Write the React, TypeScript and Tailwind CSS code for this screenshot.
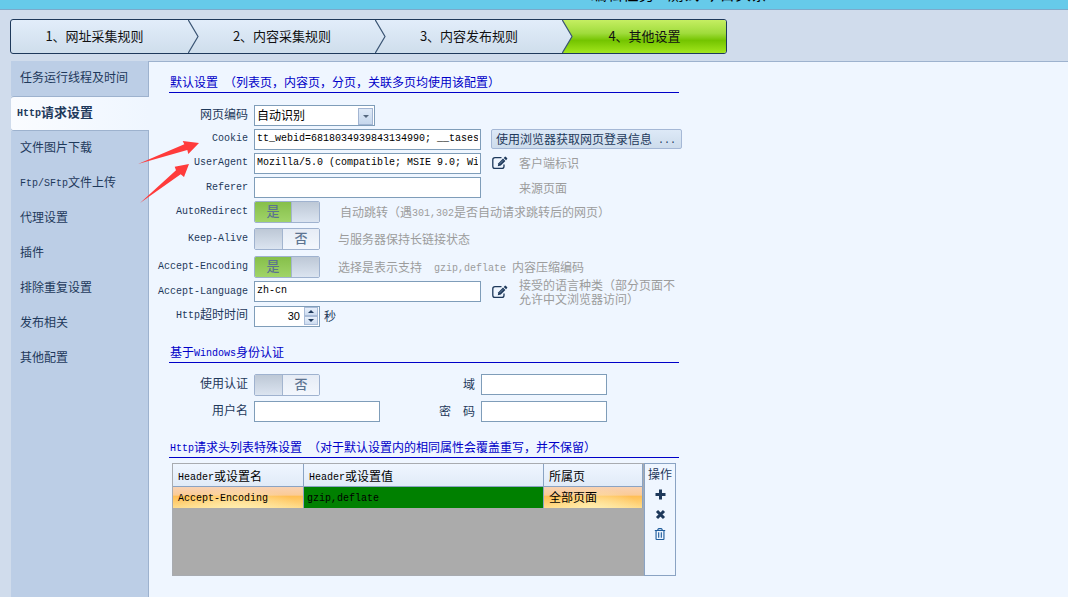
import clsx from "clsx";
import React, { useState } from "react";
import { FaRegTrashAlt } from "react-icons/fa";

const MONO = "font-['Liberation_Mono','Noto_Sans_CJK_SC',monospace]";

const steps = ["1、网址采集规则", "2、内容采集规则", "3、内容发布规则", "4、其他设置"];

const menu = [
	"任务运行线程及时间",
	"Http请求设置",
	"文件图片下载",
	"Ftp/SFtp文件上传",
	"代理设置",
	"插件",
	"排除重复设置",
	"发布相关",
	"其他配置",
];

// latin runs are set in a half-width mono face next to the full-width glyphs
const Mixed = ({ text }: { text: string }) => (
	<>
		{text.split(/([\x20-\x7e]+)/).map((part, i) =>
			i % 2 ? (
				<span
					key={i}
					className={clsx(MONO, "align-[1px] text-[10px] leading-none whitespace-pre")}
				>
					{part}
				</span>
			) : (
				part
			)
		)}
	</>
);

const Wizard = ({ current }: { current: number }) => (
	<ol className="flex h-[35px] w-[717px] overflow-hidden rounded-[3px] border border-[#1e395b] bg-linear-to-b from-[#e2edfa] to-[#cfdeec] text-[13px] text-[#111]">
		{steps.map((step, i) => (
			<li
				key={step}
				className={clsx(
					"flex",
					i === steps.length - 1 ? "flex-1" : i ? "w-[187px]" : "w-[177px]",
					i === current &&
						"bg-[linear-gradient(#c5ee62_0%,#a0dc3c_40%,#74c400_62%,#a2e61c_100%)]"
				)}
			>
				{i > 0 && (
					<svg width="11" height="33" viewBox="0 0 11 33" className="shrink-0">
						<defs>
							<linearGradient id={`step${i}`} x1="0" y1="0" x2="0" y2="1">
								<stop offset="0" stopColor="#e2edfa" />
								<stop offset="1" stopColor="#cfdeec" />
							</linearGradient>
						</defs>
						<path
							d="M0 -0.5 L10 16.5 L0 33.5"
							fill={`url(#step${i})`}
							stroke="#3c5675"
							strokeWidth="1.2"
						/>
					</svg>
				)}
				<button type="button" className="flex-1 pr-2.5 pb-0.5">
					{step}
				</button>
			</li>
		))}
	</ol>
);

const SideMenu = ({ active, onSelect }: { active: number; onSelect: (i: number) => void }) => (
	<nav className="flex w-[138px] shrink-0 flex-col">
		{menu.map((item, i) => (
			<button
				key={item}
				type="button"
				onClick={() => onSelect(i)}
				className={clsx(
					"h-[35px] border-[#9db2ce] pb-1 text-left",
					i === active
						? "rounded-l-[3px] border-y bg-linear-to-r from-[#fafcff] to-[#eff6ff] pl-[6px] text-[13px] font-bold"
						: "border-r bg-[#bccee6] pl-[9px]"
				)}
			>
				<Mixed text={item} />
			</button>
		))}
		<div className="flex-1 border-r border-[#9db2ce] bg-[#bccee6]" />
	</nav>
);

const Heading = ({ text, className }: { text: string; className?: string }) => (
	<h2
		className={clsx(
			"ml-3 h-[21px] w-[510px] border-b border-[#0000c8] pl-px leading-5 text-[#0000c8]",
			className
		)}
	>
		<Mixed text={text} />
	</h2>
);

interface RowProps {
	label: string;
	htmlFor: string;
	className: string;
	children: React.ReactNode;
}

const Row = ({ label, htmlFor, className, children }: RowProps) => (
	<div className={clsx("flex items-center", className)}>
		<label htmlFor={htmlFor} className="mr-1.5 w-[91px] shrink-0 pb-1 text-right whitespace-nowrap">
			<Mixed text={label} />
		</label>
		{children}
	</div>
);

const TextBox = ({ id, value = "", wide }: { id: string; value?: string; wide?: boolean }) => (
	<input
		id={id}
		type="text"
		defaultValue={value}
		className={clsx(
			MONO,
			"h-[21px] shrink-0 border border-[#7f9db9] bg-white px-0.5 pb-0.5 text-[10px] text-black outline-none",
			wide ? "w-[227px]" : "w-[126px]"
		)}
	/>
);

const Toggle = ({ id, initial }: { id: string; initial: boolean }) => {
	const [on, setOn] = useState(initial);
	const knob = (
		<span
			className={clsx(
				"w-[28px] border-[#a3b5cf] bg-linear-to-b from-[#bdc8d6] to-[#dbe4f0]",
				on ? "border-l" : "border-r"
			)}
		/>
	);

	return (
		<button
			id={id}
			type="button"
			role="switch"
			aria-checked={on}
			onClick={() => setOn(!on)}
			className="flex h-[22px] w-[66px] shrink-0 overflow-hidden rounded-[2px] border border-[#9fb2cf] text-[13px] leading-[18px] text-[#5c7390]"
		>
			{!on && knob}
			<span
				className={clsx(
					"h-5 flex-1 font-medium",
					on
						? "bg-linear-to-b from-[#86bf4a] to-[#a0d468]"
						: "bg-linear-to-b from-[#e6ecf5] to-[#f3f7fd]"
				)}
			>
				{on ? "是" : "否"}
			</span>
			{on && knob}
		</button>
	);
};

const Hint = ({ text, className }: { text: string; className?: string }) => (
	<span className={clsx("leading-[14px] text-[#9c9c9c]", className)}>
		<Mixed text={text} />
	</span>
);

const EditButton = ({ label }: { label: string }) => (
	<button type="button" aria-label={label} className="ml-[11px] w-[27px] shrink-0">
		<svg width="16" height="14" viewBox="0 0 16 14" fill="none">
			<path
				d="M9.5 1.6 H3 Q0.8 1.6 0.8 3.8 V10.2 Q0.8 12.4 3 12.4 H9.8 Q12 12.4 12 10.2 V8.6"
				stroke="#1e395b"
				strokeWidth="1.3"
			/>
			<path d="M5.8 10.2 L6.4 7.2 L11 2.6 L13.4 5 L8.8 9.6 Z" fill="#1e395b" />
			<path d="M11.7 1.9 L12.9 0.8 Q13.4 0.4 13.9 0.9 L15.1 2.1 Q15.6 2.6 15.1 3.1 L14.1 4.3 Z" fill="#1e395b" />
			<path d="M7.6 7.9 L11.2 4.3" stroke="#8fa6c2" strokeWidth="0.7" />
		</svg>
	</button>
);

const Spinner = ({ id }: { id: string }) => {
	const [seconds, setSeconds] = useState(30);
	const btn =
		"flex h-[9px] w-[14px] items-center justify-center border border-[#a9bcd8] bg-linear-to-b from-[#e8f0fb] to-[#cddcf0]";

	return (
		<span className="flex h-[21px] w-[66px] shrink-0 items-center border border-[#7f9db9] bg-white pr-px">
			<input
				id={id}
				type="text"
				inputMode="numeric"
				value={seconds}
				onChange={(e) => setSeconds(Number(e.target.value) || 0)}
				className="w-full min-w-0 pr-1 text-right font-['Liberation_Sans',sans-serif] text-[11px] text-black outline-none"
			/>
			<span className="flex flex-col">
				<button type="button" aria-label="增加" className={btn} onClick={() => setSeconds(seconds + 1)}>
					<svg width="6" height="3" viewBox="0 0 6 3">
						<path d="M0 3 L3 0 L6 3 Z" fill="#1e395b" />
					</svg>
				</button>
				<button type="button" aria-label="减少" className={btn} onClick={() => setSeconds(seconds - 1)}>
					<svg width="6" height="3" viewBox="0 0 6 3">
						<path d="M0 0 L3 3 L6 0 Z" fill="#1e395b" />
					</svg>
				</button>
			</span>
		</span>
	);
};

const HeaderTable = () => {
	const cell = "border-r border-[#8aa3c3] text-left font-normal";
	const picked =
		"bg-[radial-gradient(ellipse_at_50%_120%,#fff0b4_0%,#ffe9a000_70%),linear-gradient(#f8d2b4_0%,#fbcb96_38%,#ffbf55_45%,#ffdc8c_100%)]";

	return (
		<div className="mt-[5px] ml-[15px] flex h-[113px]">
			<div className="w-[472px] border border-[#a8abb0] bg-[#ababab]">
				<table className="w-full table-fixed border-separate border-spacing-0 text-black">
					<colgroup>
						<col className="w-[131px]" />
						<col className="w-[240px]" />
						<col />
					</colgroup>
					<thead>
						<tr className="h-[23px] bg-linear-to-b from-[#eff6ff] to-[#e0eaf7]">
							{["Header或设置名", "Header或设置值", "所属页"].map((h) => (
								<th key={h} className={clsx(cell, "border-b py-0 pt-0.5 pl-[5px]")}>
									<Mixed text={h} />
								</th>
							))}
						</tr>
					</thead>
					<tbody>
						<tr className="h-[21px]">
							<td className={clsx(cell, picked, "p-0 pb-0.5 pl-[5px]")}>
								<Mixed text="Accept-Encoding" />
							</td>
							<td className={clsx(cell, "bg-[#008000] p-0 pb-0.5 pl-[3px]")}>
								<Mixed text="gzip,deflate" />
							</td>
							<td className={clsx(cell, picked, "p-0 pb-0.5 pl-[5px]")}>全部页面</td>
						</tr>
					</tbody>
				</table>
			</div>
			<div className="flex w-8 flex-col items-center border border-[#8aa3c3] text-[#1e395b]">
				<span className="h-5 leading-5">操作</span>
				<button type="button" aria-label="添加" className="flex h-5 items-center">
					<svg width="11" height="11" viewBox="0 0 11 11">
						<path d="M5.5 0.5 V10.5 M0.5 5.5 H10.5" stroke="currentColor" strokeWidth="3" />
					</svg>
				</button>
				<button type="button" aria-label="删除" className="flex h-5 items-center">
					<svg width="11" height="11" viewBox="0 0 11 11">
						<path d="M2 2 L9 9 M9 2 L2 9" stroke="currentColor" strokeWidth="3" />
					</svg>
				</button>
				<button type="button" aria-label="清空" className="flex h-5 items-center">
					<FaRegTrashAlt size={12} className="text-[#1f5c9c]" />
				</button>
			</div>
		</div>
	);
};

export default function App() {
	const [active, setActive] = useState(1);

	return (
		<div className="relative flex min-h-screen flex-col bg-[#d0dcec] font-['Noto_Sans_CJK_SC',sans-serif] text-[12px] text-[#1e395b]">
			<header className="flex h-[10px] items-end justify-center overflow-hidden border-b border-[#7da9cb] bg-[#66caea] pl-[290px]">
				<h1 className="-translate-y-2 text-[16px] leading-4 whitespace-nowrap text-black">编辑任务 - 测试 今日头条</h1>
			</header>
			<div className="pt-[9px] pb-[7px] pl-[10px]">
				<Wizard current={3} />
			</div>
			<div className="flex flex-1 pl-[11px]">
				<SideMenu active={active} onSelect={setActive} />
				<main className="min-w-0 flex-1 border-t border-[#9db2ce] bg-[#eff6ff] pt-[10px] pl-2">
					<Heading text="默认设置 （列表页，内容页，分页，关联多页均使用该配置）" />
					<div className="pt-[11px]">
						<Row label="网页编码" htmlFor="charset" className="h-[23px]">
							<div className="grid h-[21px] w-[121px] items-center border border-[#7f9db9] bg-white">
								<select
									id="charset"
									className="col-start-1 row-start-1 h-full w-full appearance-none pb-0.5 pl-0.5 text-black outline-none"
								>
									<option>自动识别</option>
									<option>UTF-8</option>
									<option>GB2312</option>
								</select>
								<span className="pointer-events-none col-start-1 row-start-1 mr-px flex h-[17px] w-[15px] items-center justify-center justify-self-end border border-[#a3b5d2] bg-linear-to-b from-[#dfeaf8] to-[#c6d7ec]">
									<svg width="6" height="3" viewBox="0 0 6 3">
										<path d="M0 0 L3 3 L6 0 Z" fill="#56687f" />
									</svg>
								</span>
							</div>
						</Row>
						<Row label="Cookie" htmlFor="cookie" className="h-6">
							<TextBox id="cookie" wide value="tt_webid=6818034939843134990; __tasessionId=x1" />
							<button
								type="button"
								className="ml-2.5 h-[20px] w-[191px] rounded-[2px] border border-[#a5b8d6] bg-linear-to-b from-[#dde9f7] to-[#cddcec] pl-1 text-left leading-[18px] whitespace-nowrap"
							>
								<Mixed text="使用浏览器获取网页登录信息 ..." />
							</button>
						</Row>
						<Row label="UserAgent" htmlFor="agent" className="h-6">
							<TextBox id="agent" wide value="Mozilla/5.0 (compatible; MSIE 9.0; Windows NT 6.1)" />
							<EditButton label="编辑 UserAgent" />
							<Hint text="客户端标识" />
						</Row>
						<Row label="Referer" htmlFor="referer" className="h-[25px]">
							<TextBox id="referer" wide />
							<Hint text="来源页面" className="ml-[38px]" />
						</Row>
						<Row label="AutoRedirect" htmlFor="redirect" className="h-6">
							<Toggle id="redirect" initial />
							<Hint text="自动跳转（遇301,302是否自动请求跳转后的网页）" className="ml-5" />
						</Row>
						<Row label="Keep-Alive" htmlFor="keepalive" className="h-[30px]">
							<Toggle id="keepalive" initial={false} />
							<Hint text="与服务器保持长链接状态" className="ml-[18px]" />
						</Row>
						<Row label="Accept-Encoding" htmlFor="encoding" className="h-[25px]">
							<Toggle id="encoding" initial />
							<Hint text="选择是表示支持  gzip,deflate 内容压缩编码" className="ml-[18px]" />
						</Row>
						<Row label="Accept-Language" htmlFor="language" className="h-[25px]">
							<TextBox id="language" wide value="zh-cn" />
							<EditButton label="编辑 Accept-Language" />
							<Hint text="接受的语言种类（部分页面不允许中文浏览器访问）" className="w-[160px]" />
						</Row>
						<Row label="Http超时时间" htmlFor="timeout" className="h-6">
							<Spinner id="timeout" />
							<span className="ml-1">秒</span>
						</Row>
					</div>

					<Heading text="基于Windows身份认证" className="mt-[14px]" />
					<div className="pt-2">
						<Row label="使用认证" htmlFor="auth" className="h-[27px]">
							<Toggle id="auth" initial={false} />
							<label htmlFor="domain" className="mr-1.5 ml-[60px] w-[95px] pb-0.5 text-right">
								域
							</label>
							<TextBox id="domain" />
						</Row>
						<Row label="用户名" htmlFor="user" className="h-[27px]">
							<TextBox id="user" />
							<label htmlFor="password" className="mr-1.5 w-[95px] pb-0.5 text-right">
								密　码
							</label>
							<TextBox id="password" />
						</Row>
					</div>

					<Heading
						text="Http请求头列表特殊设置 （对于默认设置内的相同属性会覆盖重写，并不保留）"
						className="mt-3"
					/>
					<HeaderTable />
				</main>
			</div>

			{/* arrows pointing at Cookie and UserAgent */}
			<svg
				width="70"
				height="70"
				viewBox="135 138 70 70"
				className="pointer-events-none absolute top-[138px] left-[135px]"
				fill="#ff3b3b"
			>
				<path d="M138 164 L184.3 144.3 L182.7 141 L199 143 L188.3 154 L187.3 150 Z" />
				<path d="M140 203 L176 170.3 L174.7 166.7 L189 164 L184 177 L180.7 174.3 Z" />
			</svg>
		</div>
	);
}
